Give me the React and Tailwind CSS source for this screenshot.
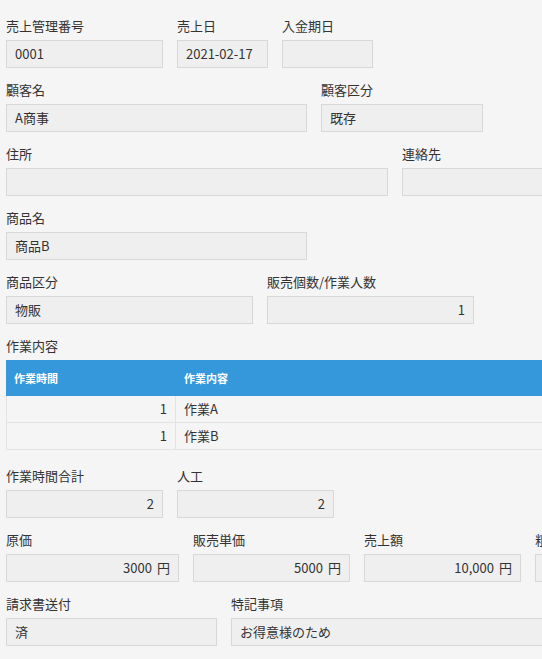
import React from 'react';

const Field = ({ label, value = '', unit, width, right = false }) => (
  <div className="flex shrink-0 flex-col" style={{ width }}>
    <div className="mb-[4px] h-[20px] whitespace-nowrap text-[13px] leading-[20px] text-[#333]">{label}</div>
    <div
      className={`h-[28px] whitespace-nowrap border border-[#d8d8d8] bg-[#efefef] px-[8px] text-[13px] leading-[26px] text-[#333] ${
        right ? 'text-right' : 'text-left'
      }`}
    >
      {value}
      {unit && <span className="ml-[5px]">{unit}</span>}
    </div>
  </div>
);

const Row = ({ children }) => <div className="mb-[12px] flex gap-[14px]">{children}</div>;

const rows = [
  { hours: '1', task: '作業A' },
  { hours: '1', task: '作業B' },
];

const App = () => {
  return (
    <div className="min-h-screen w-full overflow-hidden bg-[#f5f5f5] px-[6px] pt-[16px] font-['Noto_Sans_CJK_JP',sans-serif]">
      <Row>
        <Field label="売上管理番号" value="0001" width={157} />
        <Field label="売上日" value="2021-02-17" width={91} />
        <Field label="入金期日" width={91} />
      </Row>
      <Row>
        <Field label="顧客名" value="A商事" width={301} />
        <Field label="顧客区分" value="既存" width={162} />
      </Row>
      <Row>
        <Field label="住所" width={382} />
        <Field label="連絡先" width={382} />
      </Row>
      <Row>
        <Field label="商品名" value="商品B" width={301} />
      </Row>
      <Row>
        <Field label="商品区分" value="物販" width={247} />
        <Field label="販売個数/作業人数" value="1" width={207} right />
      </Row>

      {/* subtable */}
      <div className="mb-[16px]">
        <div className="mb-[4px] h-[20px] text-[13px] leading-[20px] text-[#333]">作業内容</div>
        <div className="w-[760px]">
          <div className="flex h-[36px] items-center bg-[#3498db] text-[11px] font-bold text-white">
            <div className="w-[170px] shrink-0 px-[8px]">作業時間</div>
            <div className="flex-1 px-[8px]">作業内容</div>
          </div>
          <div className="border-l border-[#e3e3e3]">
            {rows.map((r, i) => (
              <div key={i} className="flex h-[27px] border-b border-[#e3e3e3] text-[13px] leading-[26px] text-[#333]">
                <div className="w-[169px] shrink-0 border-r border-[#e3e3e3] px-[8px] text-right">{r.hours}</div>
                <div className="flex-1 px-[8px]">{r.task}</div>
              </div>
            ))}
          </div>
        </div>
      </div>

      <Row>
        <Field label="作業時間合計" value="2" width={157} right />
        <Field label="人工" value="2" width={157} right />
      </Row>
      <Row>
        <Field label="原価" value="3000" unit="円" width={173} right />
        <Field label="販売単価" value="5000" unit="円" width={157} right />
        <Field label="売上額" value="10,000" unit="円" width={157} right />
        <Field label="粗利" value="5,000" unit="円" width={157} right />
      </Row>
      <Row>
        <Field label="請求書送付" value="済" width={211} />
        <Field label="特記事項" value="お得意様のため" width={400} />
      </Row>
    </div>
  );
};

export default App;
